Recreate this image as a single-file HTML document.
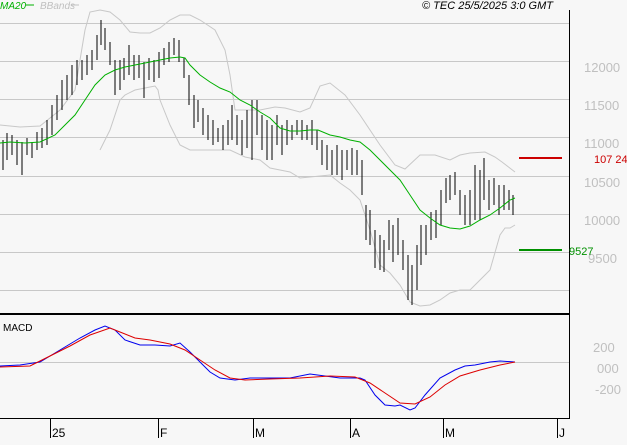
<!DOCTYPE html>
<html><head><meta charset="utf-8"><style>
html,body{margin:0;padding:0;background:#f7f7f7;}
body{width:627px;height:440px;overflow:hidden;font-family:"Liberation Sans",sans-serif;}
</style></head><body>
<svg width="627" height="440" xmlns="http://www.w3.org/2000/svg" font-family="Liberation Sans, sans-serif">
<rect width="627" height="440" fill="#f7f7f7"/>
<g stroke="#c8c8c8" stroke-width="1">
<line x1="0" y1="23.5" x2="569" y2="23.5"/>
<line x1="0" y1="61.5" x2="569" y2="61.5"/>
<line x1="0" y1="99.5" x2="569" y2="99.5"/>
<line x1="0" y1="137.5" x2="569" y2="137.5"/>
<line x1="0" y1="176.5" x2="569" y2="176.5"/>
<line x1="0" y1="214.5" x2="569" y2="214.5"/>
<line x1="0" y1="252.5" x2="569" y2="252.5"/>
<line x1="0" y1="290.5" x2="569" y2="290.5"/>
<line x1="0" y1="362.5" x2="569" y2="362.5"/>
</g>
<g fill="#c0c0c0" font-size="13">
<text x="584" y="72">12000</text>
<text x="584" y="110">11500</text>
<text x="584" y="148">11000</text>
<text x="584" y="187">10500</text>
<text x="584" y="225">10000</text>
<text x="588" y="263">9500</text>
<text x="593" y="352">200</text>
<text x="597" y="373">000</text>
<text x="595" y="394">-200</text>
</g>
<line x1="569.5" y1="10" x2="569.5" y2="419" stroke="#000"/>
<line x1="0" y1="314" x2="570" y2="314" stroke="#000" stroke-width="2"/>
<line x1="0" y1="418.5" x2="570" y2="418.5" stroke="#000"/>
<g stroke="#000">
<line x1="50.5" y1="419" x2="50.5" y2="438"/><line x1="158.5" y1="419" x2="158.5" y2="438"/>
<line x1="253.5" y1="419" x2="253.5" y2="438"/><line x1="350.5" y1="419" x2="350.5" y2="438"/>
<line x1="443.5" y1="419" x2="443.5" y2="438"/><line x1="557.5" y1="419" x2="557.5" y2="438"/>
</g>
<g font-size="12" fill="#000">
<text x="52" y="437">25</text><text x="160" y="437">F</text><text x="255" y="437">M</text>
<text x="352" y="437">A</text><text x="445" y="437">M</text><text x="559" y="437">J</text>
</g>
<text x="0" y="9" font-size="10" fill="#00b000" font-style="italic">MA20</text>
<line x1="26" y1="5" x2="34" y2="5" stroke="#00b000"/>
<text x="40" y="9" font-size="10" fill="#c0c0c0" font-style="italic">BBands</text>
<line x1="71" y1="5" x2="79" y2="5" stroke="#c0c0c0"/>
<text x="422" y="9" font-size="11" fill="#000" font-style="italic">© TEC 25/5/2025 3:0 GMT</text>
<text x="3" y="331" font-size="10" fill="#000">MACD</text>
<polyline fill="none" stroke="#c8c8c8" points="0,125 20,127 40,126 60,110 75,90 85,30 90,12 100,10 110,12 120,20 130,32 140,33 150,33 160,28 170,20 180,15 190,15 200,20 215,30 225,50 230,75 235,110 240,110 260,110 275,107 285,108 300,112 310,108 320,86 330,83 345,95 360,115 380,145 395,165 405,169 420,155 435,155 450,160 460,155 470,153 485,152 495,157 502,162 515,172"/>
<polyline fill="none" stroke="#c8c8c8" points="100,150 110,130 120,100 125,95 135,90 150,87 155,86 158,90 160,100 170,125 180,145 190,150 230,150 245,157 260,160 270,168 280,170 290,172 300,178 310,177 330,175 340,183 350,190 360,200 370,230 380,265 390,273 400,285 410,302 420,306 430,305 440,300 450,293 460,290 470,290 480,280 485,275 490,270 500,235 505,228 510,228 515,225"/>
<g stroke="#000" stroke-width="1" shape-rendering="crispEdges">
<path d="M3 140V170M7 133V160M12 135V155M17 140V165M22 142V175M27 138V155M32 142V158M37 132V150M42 128V148M47 120V145M52 105V135M57 95V120M62 80V110M67 75V100M72 65V95M77 60V85M82 60V80M87 55V75M92 50V70M97 35V60M101 20V45M105 28V50M110 42V65M115 60V95M120 60V90M124 58V80M129 45V75M134 55V80M139 55V78M144 62V98M149 58V80M154 60V82M159 52V78M164 48V65M169 42V62M174 38V55M179 40V62M184 58V78M189 75V105M194 95V128M198 100V122M203 108V135M208 115V140M213 120V145M218 128V142M223 125V150M228 120V145M232 105V140M237 115V145M242 120V155M247 110V148M252 100V160M257 100V135M262 115V150M267 120V160M272 125V160M277 115V145M282 125V155M287 120V145M292 125V140M297 120V135M302 120V140M307 125V140M312 120V145M317 130V150M322 140V165M327 145V170M332 150V175M337 145V175M342 150V180M347 150V170M352 148V175M357 150V175M362 160V195M366 205V240M370 210V245M375 230V268M380 235V270M384 240V272M389 220V250M393 225V262M398 218V255M403 240V270M408 255V300M412 265V305M417 245V290M421 225V265M426 225V255M431 212V240M436 210V238M441 190V225M446 178V203M450 175V200M455 172V195M460 190V215M465 195V225M470 190V225M475 165V220M480 170V220M484 158V200M489 180V210M494 178V205M499 185V215M504 185V210M509 190V210M513 195V215"/>
</g>
<polyline fill="none" stroke="#00b000" points="0,143 10,142 25,143 40,142 55,135 65,125 75,115 85,100 95,85 105,75 115,70 125,67 135,65 150,62 160,60 170,58 180,57 185,58 190,65 200,75 210,82 220,88 230,92 240,100 250,105 260,112 270,118 280,128 290,131 300,131 310,130 318,130 330,135 340,137 350,140 360,142 370,150 380,160 390,170 400,180 410,195 420,210 430,218 440,225 450,228 460,229 470,226 480,220 490,215 500,208 510,200 515,198"/>
<line x1="519" y1="158" x2="562" y2="158" stroke="#cc0000" stroke-width="2"/>
<text x="594" y="163" font-size="11" fill="#cc0000">107 24</text>
<line x1="519" y1="250" x2="562" y2="250" stroke="#009000" stroke-width="2"/>
<text x="569" y="255" font-size="11" fill="#009000">9527</text>
<polyline fill="none" stroke="#0000ee" points="0,366 20,365 40,362 60,350 80,338 95,330 105,326 115,330 125,340 140,345 155,345 170,346 180,343 190,352 200,362 210,372 220,378 235,380 250,378 270,378 290,378 310,374 325,376 340,378 360,378 365,380 375,395 385,405 395,406 400,405 410,410 415,408 425,395 440,378 455,370 465,366 475,365 490,362 500,361 515,362"/>
<polyline fill="none" stroke="#dd0000" points="0,367 30,366 50,356 70,346 90,335 110,328 120,332 135,338 150,340 170,344 185,350 200,360 215,370 230,378 245,380 270,379 300,378 330,376 355,377 370,383 385,393 400,403 415,404 430,397 445,385 460,376 480,370 500,365 515,362"/>
</svg>
</body></html>
